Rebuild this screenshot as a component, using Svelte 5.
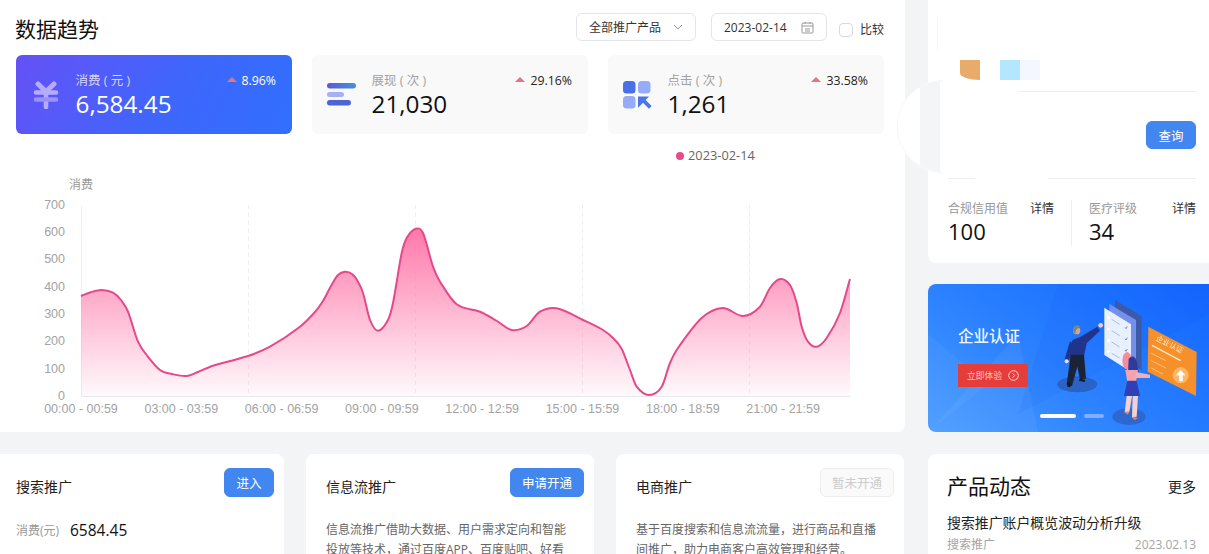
<script>
	const curve = [
		[81, 296], [90, 292.5], [101.7, 290], [113, 292.7], [121, 300], [128, 311.7], [138, 341.7], [146.7, 355], [160, 370], [172, 374], [186.7, 376], [198, 372], [213, 365.7],
		[248, 356], [270, 346.7], [300, 326.7], [315, 312], [323, 301], [331, 286], [338, 275], [345, 271.7], [352, 274], [358, 281.7], [363, 293], [370, 320], [378, 330.7], [388, 320], [393, 303],
		[401.7, 253], [406.7, 238], [415.7, 228.7], [423, 233], [433, 266.7], [440, 281.7], [456.7, 304.3], [480, 311.7], [497, 321], [511.7, 330], [526.7, 326],
		[540, 311.7], [556.7, 308.3], [583, 320], [603, 330], [613, 338], [621.7, 349], [630, 370], [636.7, 386.7], [649, 395], [661.7, 386.7], [670, 363],
		[678, 348], [701.7, 318], [722.7, 308], [743, 316], [760, 306.7], [770, 288], [780, 279], [790, 285], [796.7, 303], [801.7, 326.7], [808, 341.7],
		[816.7, 346.7], [826.7, 338], [840, 313], [850, 279]
	];

	// hermite through the sampled points, slopes from the neighbours
	function smooth(p) {
		const slope = (i) => {
			const a = p[Math.max(i - 1, 0)];
			const c = p[Math.min(i + 1, p.length - 1)];
			return (c[1] - a[1]) / (c[0] - a[0]);
		};
		let d = `M${p[0][0]} ${p[0][1]}`;
		for (let i = 0; i < p.length - 1; i++) {
			const b = p[i];
			const c = p[i + 1];
			const h = (c[0] - b[0]) / 3;
			d += ` C${(b[0] + h).toFixed(1)} ${(b[1] + slope(i) * h).toFixed(1)} ${(c[0] - h).toFixed(1)} ${(c[1] - slope(i + 1) * h).toFixed(1)} ${c[0]} ${c[1]}`;
		}
		return d;
	}

	const line = smooth(curve);
	const area = `${line} L850 396 L81 396 Z`;

	const yTicks = [0, 100, 200, 300, 400, 500, 600, 700];
	const xLabels = ['00:00 - 00:59', '03:00 - 03:59', '06:00 - 06:59', '09:00 - 09:59', '12:00 - 12:59', '15:00 - 15:59', '18:00 - 18:59', '21:00 - 21:59'];
	const grid = [248.5, 415.5, 582.5, 749.5];

	const tickY = (v) => 396 - v * 0.273;
</script>

<div class="page">
	<div class="left">
		<section class="trend">
			<header class="head">
				<h1>数据趋势</h1>
				<div class="select">全部推广产品
					<svg width="10" height="6" viewBox="0 0 10 6"><path d="M1 1l4 4 4-4" fill="none" stroke="#999" stroke-width="1"/></svg>
				</div>
				<div class="date">2023-02-14
					<svg width="13" height="13" viewBox="0 0 13 13" fill="none" stroke="#999" stroke-width="1"><rect x="1" y="2" width="11" height="10" rx="1"/><path d="M1 5h11M4 1v2M9 1v2M4 8h5M4 10h5"/></svg>
				</div>
				<span class="check"></span>
				<span class="compare">比较</span>
			</header>

			<div class="metrics">
				<div class="metric primary">
					<svg class="icon" width="26" height="28" viewBox="0 0 26 28" fill="none" stroke-linecap="round">
						<path d="M5 3l8 7.5 8-7.5" stroke="#b5acff" stroke-width="5"/>
						<path d="M3 11.5h20M13 11v15" stroke="#b5acff" stroke-width="4.6"/>
						<path d="M3 18.5h20" stroke="#9a92fb" stroke-width="4.6"/>
					</svg>
					<div class="nums">
						<div class="label">消费 ( 元 )</div>
						<div class="value">6,584.45</div>
					</div>
					<div class="delta"><i></i>8.96%</div>
				</div>
				<div class="metric">
					<svg class="icon" width="29" height="24" viewBox="0 0 29 24">
						<defs>
							<linearGradient id="bar" x1="0" x2="1" y1="0" y2="0"><stop offset="0" stop-color="#5a5cd6"/><stop offset="1" stop-color="#478fdf"/></linearGradient>
						</defs>
						<rect x="0" y="0" width="29" height="5.4" rx="2.7" fill="url(#bar)"/>
						<rect x="0" y="9" width="17" height="5" rx="2.5" fill="#a5b0f6"/>
						<rect x="0" y="17" width="24" height="5.4" rx="2.7" fill="#4d63d8"/>
					</svg>
					<div class="nums">
						<div class="label">展现 ( 次 )</div>
						<div class="value">21,030</div>
					</div>
					<div class="delta"><i></i>29.16%</div>
				</div>
				<div class="metric">
					<svg class="icon" width="29" height="28" viewBox="0 0 29 28">
						<rect x="0" y="0" width="12.5" height="12.5" rx="3.5" fill="#4a70e8"/>
						<rect x="15" y="0" width="12.5" height="12.5" rx="3.5" fill="#96acf8"/>
						<rect x="0" y="15" width="12.5" height="12.5" rx="3.5" fill="#96acf8"/>
						<path d="M15 15.5h11l-3.4 3.6 6 6-2.6 2.6-6-6-5 5z" fill="#4a74e8"/>
					</svg>
					<div class="nums">
						<div class="label">点击 ( 次 )</div>
						<div class="value">1,261</div>
					</div>
					<div class="delta"><i></i>33.58%</div>
				</div>
			</div>

			<div class="legend"><i></i>2023-02-14</div>

			<svg class="chart" width="905" height="260" viewBox="0 172 905 260">
				<defs>
					<linearGradient id="fill" x1="0" x2="0" y1="228" y2="396" gradientUnits="userSpaceOnUse">
						<stop offset="0" stop-color="#ff78aa"/>
						<stop offset="1" stop-color="#ff78aa" stop-opacity="0.04"/>
					</linearGradient>
				</defs>
				<text class="unit" x="69" y="189">消费</text>
				{#each yTicks as v}
					<text class="tick" x="65" y={tickY(v) + 3.8} text-anchor="end">{v}</text>
				{/each}
				<path d="M81.5 205V396" stroke="#f0f1f5" fill="none"/>
				{#each grid as x}
					<path d="M{x} 205V396" stroke="#eceef2" stroke-dasharray="4 4" fill="none"/>
				{/each}
				<path d={area} fill="url(#fill)"/>
				<path d={line} fill="none" stroke="#e5498a" stroke-width="2"/>
				<path d="M81 396.5H851" stroke="#e8eaf2" fill="none"/>
				{#each xLabels as t, i}
					<text class="tick" x={81 + i * 100.3} y="413" text-anchor="middle">{t}</text>
				{/each}
			</svg>
		</section>

		<div class="products">
			<div class="product first">
				<div class="prod-head">
					<h3>搜索推广</h3>
					<button class="btn">进入</button>
				</div>
				<div class="spend"><span>消费(元)</span><b>6584.45</b></div>
			</div>
			<div class="product">
				<div class="prod-head">
					<h3>信息流推广</h3>
					<button class="btn wide">申请开通</button>
				</div>
				<p>信息流推广借助大数据、用户需求定向和智能<br/>投放等技术，通过百度APP、百度贴吧、好看</p>
			</div>
			<div class="product">
				<div class="prod-head">
					<h3>电商推广</h3>
					<button class="btn wide off">暂未开通</button>
				</div>
				<p>基于百度搜索和信息流流量，进行商品和直播<br/>间推广，助力电商客户高效管理和经营。</p>
			</div>
		</div>
	</div>

	<div class="right">
		<section class="account">
			<div class="swatches">
				<span class="orange"></span>
				<span class="sky"></span>
				<span class="pale"></span>
			</div>
			<div class="rule short"></div>
			<div class="query"><button class="btn">查询</button></div>
			<div class="rule split"><span></span><span></span></div>
			<div class="stats">
				<div class="stat">
					<div class="stat-top"><span>合规信用值</span><em>详情</em></div>
					<div class="stat-num">100</div>
				</div>
				<div class="stat">
					<div class="stat-top"><span>医疗评级</span><em>详情</em></div>
					<div class="stat-num">34</div>
				</div>
			</div>
		</section>

		<section class="banner">
			<svg class="shards" width="281" height="148" viewBox="0 0 281 148">
				<path d="M0 148L90 50 110 148z" fill="#fff" opacity=".05"/>
				<path d="M0 50L60 100 0 148z" fill="#fff" opacity=".04"/>
				<path d="M130 0L281 0 281 30 90 130z" fill="#0a4fe0" opacity=".08"/>
			</svg>
			<div class="promo">
				<div class="promo-title">企业认证</div>
				<div class="promo-btn">立即体验
					<svg width="11" height="11" viewBox="0 0 11 11" fill="none" stroke="#ffd0c8" stroke-width="1"><circle cx="5.5" cy="5.5" r="4.8"/><path d="M4.5 3.2l2.2 2.3-2.2 2.3"/></svg>
				</div>
			</div>
			<svg class="art" width="159" height="140" viewBox="0 0 477 420">
				<ellipse cx="82" cy="283" rx="60" ry="24" fill="#2a62c6"/>
				<ellipse cx="237" cy="380" rx="50" ry="25" fill="#2c68cf"/>
				<path d="M195 30L275 78V240L195 192z" fill="#3d5aa8"/>
				<path d="M178 42L258 90V245L178 197z" fill="#7590ea"/>
				<path d="M163 53L243 103V245L163 195z" fill="#e9f0fd"/>
				<g stroke="#a9bcec" stroke-width="3" fill="none">
					<path d="M185 88l24 15M185 122l24 15M185 156l24 15M185 190l24 14"/>
				</g>
				<g fill="#fff">
					<circle cx="175" cy="83" r="4"/><circle cx="175" cy="117" r="4"/><circle cx="175" cy="151" r="4"/><circle cx="175" cy="185" r="4"/>
				</g>
				<path d="M225 112l3 4 4-7M225 146l3 4 4-7M225 180l3 4 4-7" stroke="#3c5aa8" stroke-width="2" fill="none"/>

				<path d="M295 110L440 186 438 318 293 245z" fill="#f6902a"/>
				<text class="card-text" transform="translate(316 150) rotate(27)">企业认证</text>
				<path d="M306 166L392 212" stroke="#ffe9c9" stroke-width="4"/>
				<path d="M304 190L348 212M304 212L348 234M304 234L338 252" stroke="#ffc27d" stroke-width="3"/>
				<circle cx="392" cy="256" r="24" fill="#ffb765"/>
				<path d="M392 240L406 256H398V274H387V256H378z" fill="#fff"/>

				<path d="M68 150L92 140 142 110 150 122 110 160 102 198H62L58 172z" fill="#20348c"/>
				<path d="M60 154L44 208 56 212 78 170z" fill="#20348c"/>
				<path d="M62 194H102L108 266 90 270 82 230 66 288 50 284z" fill="#1b2338"/>
				<circle cx="80" cy="122" r="11" fill="#d8a48e"/>
				<path d="M70 124Q66 106 84 106 94 110 86 114 76 116 76 134z" fill="#77887f"/>
				<circle cx="152" cy="106" r="7" fill="#f1cdbf"/>
				<circle cx="50" cy="214" r="6" fill="#f1e3dc"/>
				<path d="M90 266L106 270 104 276 86 272z" fill="#141a2c"/>
				<path d="M52 276L64 282 60 292 52 290z" fill="#141a2c"/>

				<ellipse cx="231" cy="212" rx="14" ry="26" fill="#f38c9c"/>
				<path d="M236 206Q252 190 260 214L266 246 234 250z" fill="#2e3b9c"/>
				<path d="M226 240H264L258 276H232z" fill="#f3a3ab"/>
				<path d="M258 246L300 254 300 264 256 264z" fill="#f3b0b4"/>
				<path d="M232 272H260L270 318H222z" fill="#3040b4"/>
				<path d="M230 318H246L238 366H224zM248 318H264L260 380 246 382z" fill="#f6d0cc"/>
				<path d="M222 366L238 364 234 374zM244 380L264 384 254 390z" fill="#e98878"/>
			</svg>
			<div class="dots"><span class="on"></span><span></span></div>
		</section>

		<section class="news">
			<div class="news-head"><h2>产品动态</h2><span>更多</span></div>
			<div class="news-title">搜索推广账户概览波动分析升级</div>
			<div class="news-meta"><span>搜索推广</span><span>2023.02.13</span></div>
		</section>
	</div>

	<div class="arc"></div>
	<div class="blot"><span></span></div>
</div>

<style>
	:global(body) {
		margin: 0;
		background: #f3f4f6;
	}
	.page {
		position: relative;
		display: grid;
		grid-template-columns: 905px 281px;
		column-gap: 23px;
		width: 1209px;
		height: 554px;
		overflow: hidden;
		background: #f3f4f6;
		font-family: "Open Sans", "Noto Sans CJK SC", sans-serif;
		color: #111;
	}
	.left {
		display: flex;
		flex-direction: column;
		gap: 22px;
	}
	.right {
		display: flex;
		flex-direction: column;
		gap: 21px;
	}
	h1, h2, h3, p {
		margin: 0;
		font-weight: 400;
	}

	.trend {
		height: 432px;
		flex: none;
		background: #fff;
		border-bottom-right-radius: 8px;
		overflow: hidden;
	}
	.head {
		display: flex;
		align-items: flex-start;
		height: 55px;
		padding: 13px 21px 0 15px;
		box-sizing: border-box;
		font-size: 12px;
		color: #333;
	}
	h1 {
		font-size: 21px;
		line-height: 32px;
		color: #111;
		margin-right: auto;
	}
	.select, .date {
		display: flex;
		align-items: center;
		justify-content: space-between;
		height: 28px;
		box-sizing: border-box;
		padding: 0 12px;
		border: 1px solid #e3e5ea;
		border-radius: 6px;
	}
	.select {
		width: 120px;
		padding-right: 12px;
	}
	.date {
		width: 116px;
		margin-left: 15px;
		padding-right: 12px;
	}
	.check {
		width: 14px;
		height: 14px;
		box-sizing: border-box;
		margin: 10px 0 0 12px;
		border: 1px solid #d6d8dd;
		border-radius: 4px;
	}
	.compare {
		margin: 8px 0 0 7px;
		line-height: 18px;
	}

	.metrics {
		display: flex;
		gap: 20px;
		padding-left: 16px;
	}
	.metric {
		position: relative;
		display: flex;
		align-items: center;
		width: 276px;
		height: 79px;
		box-sizing: border-box;
		padding-left: 15px;
		background: #f9f9fa;
		border-radius: 6px;
	}
	.metric.primary {
		padding-left: 17px;
		background: linear-gradient(120deg, #6551f6 0%, #3f66fb 55%, #306fff 100%);
		color: #fff;
	}
	.icon {
		flex: none;
		width: 29px;
	}
	.primary .icon {
		width: 26px;
	}
	.nums {
		margin-left: 15.5px;
	}
	.primary .nums {
		margin-left: 16.5px;
	}
	.label {
		padding-top: 2px;
		font-size: 12.5px;
		line-height: 16px;
		color: #a2a2a2;
	}
	.primary .label {
		color: #d8d4ff;
	}
	.value {
		font-size: 24.3px;
		line-height: 32px;
		margin-top: -1px;
		margin-bottom: -1px;
	}
	.delta {
		position: absolute;
		top: 17px;
		right: 16px;
		display: flex;
		align-items: center;
		font-size: 12.3px;
		line-height: 18px;
		color: #222;
	}
	.primary .delta {
		color: #fff;
	}
	.delta i {
		width: 0;
		height: 0;
		margin-right: 5px;
		margin-top: -3px;
		border-left: 5.5px solid transparent;
		border-right: 5.5px solid transparent;
		border-bottom: 5px solid #e2757f;
	}

	.legend {
		display: flex;
		align-items: center;
		height: 16px;
		margin: 13px 0 9px 676px;
		font-size: 12.8px;
		color: #666;
	}
	.legend i {
		width: 8px;
		height: 8px;
		margin-right: 4px;
		margin-top: 2px;
		border-radius: 50%;
		background: #ea4a8a;
	}
	.chart {
		display: block;
	}
	.tick {
		font-family: "Liberation Sans", sans-serif;
		font-size: 12.5px;
		fill: #a3a3a3;
	}
	.unit {
		font-family: "Noto Sans CJK SC", sans-serif;
		font-size: 12px;
		fill: #999;
	}

	.products {
		display: flex;
		gap: 22px;
	}
	.product {
		width: 288px;
		height: 140px;
		flex: none;
		box-sizing: border-box;
		padding: 14px 10px 0 20px;
		background: #fff;
		border-radius: 8px;
		font-size: 12px;
	}
	.product.first {
		width: 284px;
		padding-left: 16px;
		border-radius: 0 8px 8px 0;
	}
	.prod-head {
		display: flex;
		align-items: flex-start;
		justify-content: space-between;
		height: 47px;
	}
	h3 {
		font-size: 14px;
		line-height: 20px;
		margin-top: 9px;
		color: #222;
	}
	.btn {
		width: 50px;
		height: 29px;
		padding: 0;
		border: 1px solid #4286f0;
		border-radius: 6px;
		background: #4286f0;
		color: #fff;
		font: inherit;
		font-size: 12.5px;
	}
	.btn.wide {
		width: 74px;
	}
	.btn.off {
		background: #fafafa;
		border-color: #eee;
		color: #ccc;
	}
	.spend {
		display: flex;
		align-items: center;
		gap: 11px;
		margin-top: 4px;
		color: #999;
	}
	.spend span {
		width: 43px;
		white-space: nowrap;
	}
	.spend b {
		font-size: 15.5px;
		font-weight: 400;
		color: #111;
	}
	.product p {
		margin-top: 5px;
		line-height: 19.5px;
		color: #666;
		white-space: nowrap;
	}

	.account {
		height: 263px;
		flex: none;
		box-sizing: border-box;
		padding: 60px 13px 0 20px;
		background: #fff;
		border-bottom-left-radius: 8px;
	}
	.swatches {
		display: flex;
		height: 20px;
		margin-left: 12px;
	}
	.swatches span {
		width: 20px;
		height: 20px;
	}
	.orange {
		margin-right: 20px;
		background: #e8ab6a;
		border-bottom-left-radius: 20px 7px;
	}
	.sky {
		background: #b3e6ff;
	}
	.pale {
		background: #f4f7ff;
	}
	.rule.short {
		height: 1px;
		margin: 11px 0 0 70px;
		background: #eeeef0;
	}
	.query {
		display: flex;
		justify-content: flex-end;
		margin-top: 29px;
	}
	.query .btn {
		height: 28px;
	}
	.rule.split {
		display: flex;
		justify-content: space-between;
		margin-top: 29px;
	}
	.split span {
		width: 27px;
		height: 1px;
		background: #eeeef0;
	}
	.split span + span {
		width: 148px;
	}
	.stats {
		display: flex;
		margin-top: 21px;
		font-size: 12px;
	}
	.stat {
		width: 106px;
		height: 46px;
		padding-right: 17px;
	}
	.stat + .stat {
		width: 107px;
		padding: 0 0 0 17px;
		border-left: 1px solid #eeeef0;
	}
	.stat-top {
		display: flex;
		justify-content: space-between;
		line-height: 17px;
		color: #999;
	}
	.stat-top em {
		font-style: normal;
		color: #333;
	}
	.stat-num {
		font-size: 22px;
		line-height: 28px;
	}

	.banner {
		position: relative;
		height: 148px;
		flex: none;
		overflow: hidden;
		border-radius: 8px 0 0 8px;
		background: linear-gradient(215deg, #1266ff 0%, #2a80ff 55%, #4a9cff 100%);
	}
	.shards {
		position: absolute;
		inset: 0;
	}
	.promo {
		position: relative;
		padding: 41px 0 0 30px;
	}
	.promo-title {
		font-size: 15.5px;
		line-height: 22px;
		color: #f2f7ff;
		font-weight: 500;
	}
	.promo-btn {
		display: flex;
		align-items: center;
		justify-content: space-between;
		width: 70px;
		height: 23px;
		box-sizing: border-box;
		padding: 0 9px 0 9px;
		margin-top: 17px;
		background: #e53c3c;
		color: #ffc6bf;
		font-size: 8.8px;
	}
	.art {
		position: absolute;
		top: 6px;
		left: 122px;
		filter: blur(0.4px);
	}
	.card-text {
		font-size: 22px;
		fill: #ffe9c9;
		font-family: "Noto Sans CJK SC", sans-serif;
	}
	.dots {
		position: absolute;
		left: 112px;
		top: 130px;
		display: flex;
		gap: 8px;
	}
	.dots span {
		width: 20px;
		height: 4px;
		border-radius: 2px;
		background: #7fb0ff;
	}
	.dots .on {
		width: 36px;
		background: #fff;
	}

	.news {
		flex: none;
		height: 140px;
		box-sizing: border-box;
		padding: 16px 13px 0 19px;
		background: #fff;
		border-radius: 8px 0 0 8px;
		margin-top: 1px;
	}
	.news-head {
		display: flex;
		align-items: center;
		justify-content: space-between;
		height: 32px;
	}
	h2 {
		font-size: 21px;
		line-height: 32px;
	}
	.news-head span {
		font-size: 14px;
		color: #222;
	}
	.news-title {
		margin-top: 10px;
		font-size: 13.9px;
		line-height: 22px;
		color: #222;
	}
	.news-meta {
		display: flex;
		justify-content: space-between;
		margin-top: 2px;
		font-size: 12px;
		line-height: 18px;
		color: #a5a5a5;
	}

	/* white smudges lying over the gutter */
	.arc {
		position: absolute;
		left: 937px;
		top: 17px;
		width: 1px;
		height: 33px;
		background: #f8f8f9;
	}
	.blot {
		position: absolute;
		left: 897px;
		top: 80px;
		width: 46px;
		height: 93px;
		overflow: hidden;
		box-sizing: border-box;
		border: 1px solid #f7f7f8;
		border-right: 0;
		border-radius: 46.5px 0 0 46.5px;
		background: #fff;
	}
	.blot span {
		position: absolute;
		top: 0;
		bottom: 0;
		left: 22px;
		width: 20px;
		background: #f4f5f7;
	}
</style>
